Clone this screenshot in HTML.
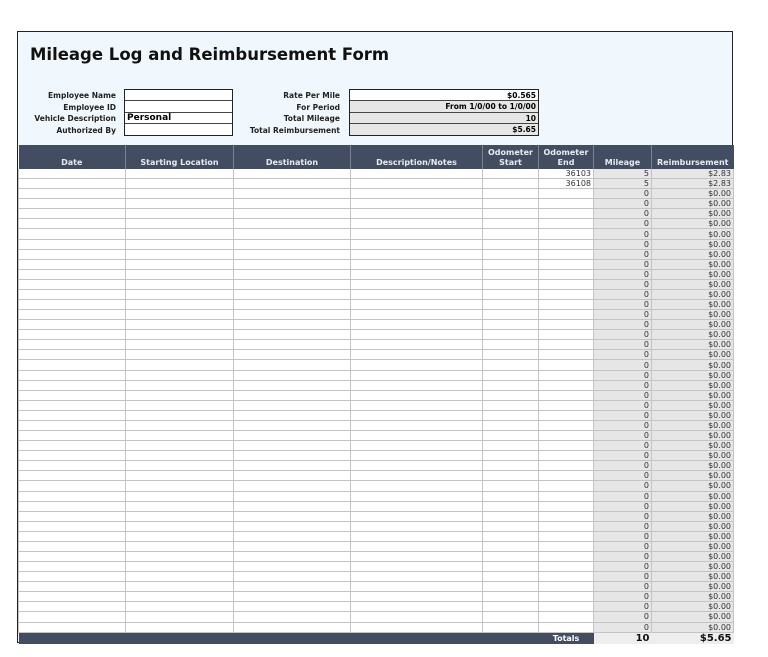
<!DOCTYPE html>
<html><head><style>
body{margin:0;width:768px;height:657px;background:#fff;font-family:"DejaVu Sans","Liberation Sans",sans-serif;position:relative;overflow:hidden}
.box{position:absolute;left:17px;top:31px;width:716px;height:612px;border:1px solid #222;box-sizing:border-box;background:#f1f8fd}
.t{position:absolute;left:30px;top:45px;font-size:16.5px;font-weight:bold;color:#111}
.lab{position:absolute;font-size:7.5px;font-weight:bold;text-align:right;color:#222;line-height:11.5px}
.inp{position:absolute;border:1.5px solid #222;box-sizing:border-box;background:#fff}
.inp div{height:11.3px;border-bottom:1px solid #444;box-sizing:border-box;font-size:7.5px;font-weight:bold;line-height:11px;padding:0 2px}
.inp div:last-child{border-bottom:none}
table{position:absolute;left:18px;top:145px;width:715px;border-collapse:collapse;table-layout:fixed}
th{background:#434d62;color:#e8ecf2;font-size:8px;font-weight:bold;height:23px;vertical-align:bottom;padding:0 0 1px;border-left:1px solid #7a8294;line-height:10px}
td{height:9.08px;border:1px solid #c4c4c4;border-top:none;padding:0 2px;font-size:8px;line-height:9px;text-align:right;color:#333;background:#fff}
td.g{background:#e6e6e6}
tr.tot td{background:#434d62;border:none;height:11px;color:#fff;font-weight:bold}
tr.tot td.g{background:#eee;color:#111;font-size:10px}
</style></head><body>
<div class="box"></div>
<div class="t">Mileage Log and Reimbursement Form</div>
<div class="lab" style="left:20px;top:90px;width:96px">Employee Name<br>Employee ID<br>Vehicle Description<br>Authorized By</div>
<div class="inp" style="left:124px;top:89px;width:109px;height:47px"><div></div><div></div><div style="font-size:9px">Personal</div><div></div></div>
<div class="lab" style="left:230px;top:90px;width:110px">Rate Per Mile<br>For Period<br>Total Mileage<br>Total Reimbursement</div>
<div class="inp" style="left:349px;top:89px;width:190px;height:47px;text-align:right"><div>$0.565</div><div style="background:#e6e6e6">From 1/0/00 to 1/0/00</div><div style="background:#e6e6e6">10</div><div style="background:#e6e6e6">$5.65</div></div>
<table id="tb">
<colgroup><col style="width:107px"><col style="width:108px"><col style="width:117px"><col style="width:132px"><col style="width:56px"><col style="width:55px"><col style="width:58px"><col style="width:82px"></colgroup>
<tr><th style="border-left:none">Date</th><th>Starting Location</th><th>Destination</th><th>Description/Notes</th><th>Odometer<br>Start</th><th>Odometer<br>End</th><th>Mileage</th><th>Reimbursement</th></tr>
</table>
<script>
var tb=document.getElementById('tb'),h='';
for(var i=0;i<46;i++){var e=i==0?'36103':i==1?'36108':'',m=i<2?'5':'0',r=i<2?'$2.83':'$0.00';
h+='<tr><td></td><td></td><td></td><td></td><td></td><td>'+e+'</td><td class="g">'+m+'</td><td class="g">'+r+'</td></tr>';}
h+='<tr class="tot"><td></td><td></td><td></td><td></td><td></td><td style="text-align:center">Totals</td><td class="g">10</td><td class="g">$5.65</td></tr>';
tb.insertAdjacentHTML('beforeend',h);
</script>
</body></html>
